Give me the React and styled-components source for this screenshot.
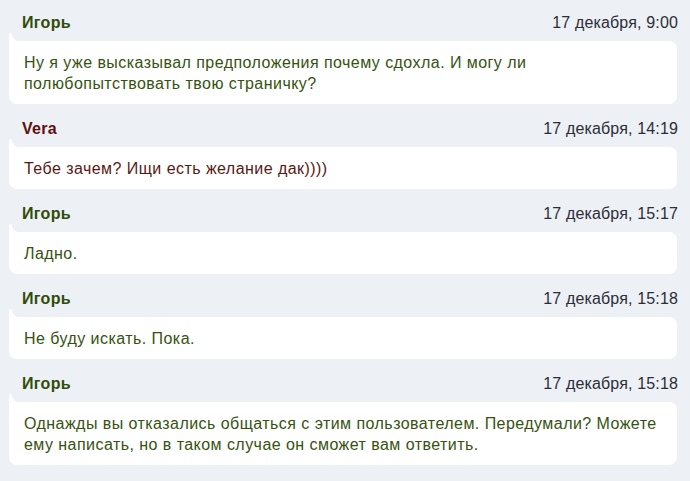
import React from "react";
import styled, { createGlobalStyle } from "styled-components";

const GlobalStyle = createGlobalStyle`
  html, body {
    margin: 0;
    padding: 0;
    background: #edf0f5;
  }
  body {
    font-family: "Liberation Sans", Arial, sans-serif;
  }
`;

const palette = {
  igor: { name: "#2f4d0a", text: "#36520f" },
  vera: { name: "#5e0f0f", text: "#5a1812" },
};

const Thread = styled.div`
  width: 690px;
  height: 481px;
  box-sizing: border-box;
  padding: 13px 12px 0 9px;
  display: flex;
  flex-direction: column;
  gap: 15px;
  background: #edf0f5;
  overflow: hidden;
`;

const Message = styled.div`
  display: flex;
  flex-direction: column;
`;

const Header = styled.div`
  display: flex;
  justify-content: space-between;
  align-items: center;
  height: 20px;
  margin-bottom: 8px;
  padding-left: 13px;
  font-size: 16px;
`;

const Name = styled.span`
  font-weight: bold;
  letter-spacing: 0.3px;
  color: ${(p) => palette[p.$who].name};
`;

const Date = styled.span`
  letter-spacing: 0.15px;
  color: #2a2e38;
`;

const Bubble = styled.div`
  position: relative;
  margin-right: 1px;
  padding: 11px 15px 10px;
  background: #fff;
  border-radius: 0 8px 8px 8px;
  font-size: 16px;
  line-height: 21px;
  letter-spacing: 0.45px;
  color: ${(p) => palette[p.$who].text};

  &::before {
    content: "";
    position: absolute;
    left: 0;
    top: -8px;
    width: 11px;
    height: 8px;
    background: radial-gradient(
      circle at 100% 0,
      transparent 8px,
      #fff 8.6px
    );
    border-top-left-radius: 2px;
  }
`;

const messages = [
  {
    who: "igor",
    name: "Игорь",
    date: "17 декабря, 9:00",
    text: "Ну я уже высказывал предположения почему сдохла. И могу ли полюбопытствовать твою страничку?",
  },
  {
    who: "vera",
    name: "Vera",
    date: "17 декабря, 14:19",
    text: "Тебе зачем? Ищи есть желание дак))))",
  },
  { who: "igor", name: "Игорь", date: "17 декабря, 15:17", text: "Ладно." },
  {
    who: "igor",
    name: "Игорь",
    date: "17 декабря, 15:18",
    text: "Не буду искать. Пока.",
  },
  {
    who: "igor",
    name: "Игорь",
    date: "17 декабря, 15:18",
    text: "Однажды вы отказались общаться с этим пользователем. Передумали? Можете ему написать, но в таком случае он сможет вам ответить.",
  },
];

export default function App() {
  return (
    <>
      <GlobalStyle />
      <Thread>
        {messages.map((m, i) => (
          <Message key={i}>
            <Header>
              <Name $who={m.who}>{m.name}</Name>
              <Date>{m.date}</Date>
            </Header>
            <Bubble $who={m.who}>{m.text}</Bubble>
          </Message>
        ))}
      </Thread>
    </>
  );
}
